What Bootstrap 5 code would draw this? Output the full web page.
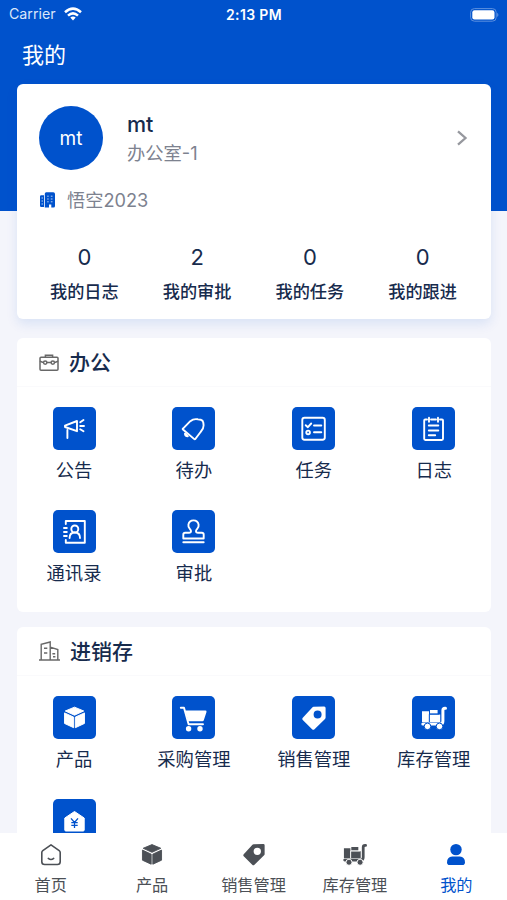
<!DOCTYPE html>
<html lang="zh-CN">
<head>
<meta charset="utf-8">
<meta name="viewport" content="width=device-width, initial-scale=1">
<title>我的</title>
<link href="https://cdn.jsdelivr.net/npm/bootstrap@5.3.0/dist/css/bootstrap.min.css" rel="stylesheet">
<style>
:root{--brand:#0052cc;--ink:#172b4d}
html,body{height:900px;overflow:hidden}
body{background:#f4f5fb;color:var(--ink);font-family:Inter,"Noto Sans CJK SC",sans-serif;line-height:1}
svg{display:block}
.hero{background:var(--brand);height:211px;padding-top:1px}
.status-line{height:27px;font-size:14.2px;padding:0 8px 0 9px;display:grid;grid-template-columns:1fr auto 1fr}
.status-line .carrier{color:#dbe7fa}
.status-line .clock{font-weight:600;font-size:14px;letter-spacing:.35px}
.page-title{font-size:22px;height:54px;padding-left:22px}
.content-wrap{margin:-127px 16px 0 17px}
.panel{background:#fff;border-radius:6px}
.profile{height:235px;box-shadow:0 5px 12px rgba(0,82,204,.11);padding:22px 0 0}
.who{height:64px;padding:0 23px 0 22px}
.avatar{width:64px;height:64px;border-radius:50%;background:var(--brand);font-size:19px}
.who-name{font-size:21.5px;height:31px;font-weight:500;padding-top:3px}
.who-dept{font-size:18.3px;height:29px;color:#7d828f}
.company{height:30px;margin:15px 0 0 23px;font-size:18.2px;color:#7d828f;gap:12px}
.stats{padding:0 12px 0 11px;margin-top:25px}
.stats .num{font-size:22px;height:34px;line-height:34px}
.stats .cap{font-size:17.2px;font-weight:500;height:34px;line-height:35px}
.office{height:274px;margin-top:19px}
.trade{height:290px;margin-top:15px}
.panel-head{height:49px;border-bottom:1px solid #fafafc;padding-left:22px;gap:10px;font-size:21px;font-weight:500}
.apps{display:grid;grid-template-columns:repeat(4,80px);justify-content:space-between;padding:20px 17.3px 0 17px;row-gap:24.7px}
.app{height:78px;font-size:18.3px;white-space:nowrap}
.tile{width:43px;height:43px;border-radius:5px;background:var(--brand)}
.app span{height:35px;line-height:41px}
.trade .app span{line-height:40px}
.tabs{height:67px;background:#fff;color:#4c5056;font-size:16.2px}
.tabs a{flex:1 0 0;color:inherit;text-decoration:none;white-space:nowrap;padding-top:10px}
.tabs a span{height:34px;line-height:38px}
.tabs a.active{color:var(--brand)}
.ln{fill:none;stroke:#fff;stroke-width:1.9;stroke-linecap:round;stroke-linejoin:round}
</style>
</head>
<body>
<svg width="0" height="0" class="position-absolute">
  <symbol id="box" viewBox="0 0 24 24"><path fill="currentColor" stroke="currentColor" stroke-width="1" stroke-linejoin="round" d="M12 1.2 21.6 5.2 12 9.6 2.4 5.2zM1.6 7.2 11.1 11.6V22.6L1.6 18.2zM22.4 7.2 12.9 11.6V22.6L22.4 18.2z"/></symbol>
  <symbol id="tag" viewBox="0 0 24 24"><path fill="currentColor" fill-rule="evenodd" d="M11.6.8 22.2.5Q23.6.5 23.6 2V11.6Q23.6 12.3 23 12.9L12.5 23.2Q11.3 24.4 10.1 23.2L.8 14Q-.2 12.9.8 11.8L10.3 1.4Q10.8.8 11.6.8zM15.6 4.5a4 4 0 1 0 0 8 4 4 0 0 0 0-8z"/></symbol>
  <symbol id="trolley" viewBox="0 0 26 24"><path fill="currentColor" d="M1 5.2H8V16H1zM9 4h7.6v3.6H9zM8.6 8.6h10.6V16H8.6z"/><path d="M8.3 16V8.2h10" fill="none" stroke="var(--gap)" stroke-width=".9"/><path d="M1.8 18h17.5q2.6 0 2.6-3V4.2q0-2 2-2h.6" fill="none" stroke="currentColor" stroke-width="3" stroke-linecap="round"/><circle cx="6.5" cy="20.4" r="3.3" fill="currentColor" stroke="var(--gap)" stroke-width="1"/><circle cx="18.5" cy="20.4" r="3.3" fill="currentColor" stroke="var(--gap)" stroke-width="1"/></symbol>
</svg>

<header class="hero text-white">
  <div class="status-line align-items-center">
    <div class="d-flex align-items-center gap-2"><span class="carrier">Carrier</span>
      <svg class="ms-n1" width="18" height="14" viewBox="0 0 18 14" fill="none" stroke="#fff" stroke-width="2.5"><path d="M1 5.2Q9-2 17 5.2M4 8.6Q9 4.1 14 8.6"/><path d="M6.3 10.6Q9 8.3 11.7 10.6L9 13.6z" fill="#fff" stroke="none"/></svg>
    </div>
    <span class="clock">2:13 PM</span>
    <svg class="ms-auto" width="30" height="14" viewBox="0 0 30 14"><rect x="1.6" y=".6" width="25.6" height="12.6" rx="3.8" fill="none" stroke="#5c90df"/><rect x="3.3" y="2.3" width="22.2" height="9.2" rx="2.2" fill="#fff"/><path d="M28.4 4.8q1.8 2.1 0 4.2z" fill="#7da7e6"/></svg>
  </div>
  <div class="page-title d-flex align-items-center">我的</div>
</header>

<main class="content-wrap">
  <section class="panel profile">
    <div class="who d-flex align-items-center">
      <div class="avatar d-flex align-items-center justify-content-center text-white flex-shrink-0">mt</div>
      <div class="ms-4 flex-grow-1 d-flex flex-column">
        <div class="who-name d-flex align-items-center">mt</div>
        <div class="who-dept d-flex align-items-center">办公室-1</div>
      </div>
      <svg width="12" height="16" viewBox="0 0 12 16"><path d="M2 1.3 9.5 8 2 14.7" fill="none" stroke="#96989e" stroke-width="2.3"/></svg>
    </div>
    <div class="company d-flex align-items-center">
      <svg width="15" height="16" viewBox="0 0 15 16"><path d="M0 4.5Q0 3.2 1.2 3.2H4V15H1.2Q0 15 0 13.8zM4.8 1.8Q4.8.3 6.2.3H13.3Q15 .3 15 2V14Q15 15.5 13.5 15.5H11.3V12.4H9v3.1H4.8z" fill="#0052cc"/><path d="M1.5 6H3M1.5 9H3M1.5 12H3M7.2 4.2H8.7M7.2 7H8.7M7.2 9.8H8.7M10.8 4.2h1.7M10.8 7h1.7M10.8 9.8h1.7" stroke="#b5d0f7" stroke-width="1"/></svg>
      <span>悟空2023</span>
    </div>
    <div class="stats d-flex text-center">
      <div class="col-3"><div class="num">0</div><div class="cap">我的日志</div></div>
      <div class="col-3"><div class="num">2</div><div class="cap">我的审批</div></div>
      <div class="col-3"><div class="num">0</div><div class="cap">我的任务</div></div>
      <div class="col-3"><div class="num">0</div><div class="cap">我的跟进</div></div>
    </div>
  </section>

  <section class="panel office">
    <div class="panel-head d-flex align-items-center">
      <svg width="20" height="17" viewBox="0 0 20 17" fill="none" stroke="#686868" stroke-width="1.5"><rect x="1" y="3.2" width="18" height="13" rx="1"/><path d="M6.4 3V1.2h7.2V3M1 7.2Q3 8.4 4.4 8.4M15.6 8.4Q17 8.4 19 7.2M8 8.6h4"/><circle cx="6.2" cy="8.6" r="1.7"/><circle cx="13.8" cy="8.6" r="1.7"/></svg>
      <span>办公</span>
    </div>
    <div class="apps">
      <div class="app d-flex flex-column align-items-center">
        <div class="tile"><svg class="ln" width="43" height="43" viewBox="0 0 43 43"><path d="M12 18.6 24 14V24.2L12 20zM14.4 23V31M27.2 15.3 30.5 13M27.2 19H31M27.2 22.2 30.5 24.3"/></svg></div><span>公告</span></div>
      <div class="app d-flex flex-column align-items-center">
        <div class="tile"><svg class="ln" width="43" height="43" viewBox="0 0 43 43"><path d="M11 21.6 18.3 14.2Q21.6 11.4 26 12.3L28.8 12.7Q31 13.2 31.3 15.6L31.6 18.4Q31.7 21.8 28.6 25L23.5 31.8Q22.8 32.6 22 31.9L11 22.6Q10.4 22.1 11 21.6z"/><path d="M13 26.5Q12.8 29.2 15.8 29.2L13.6 27z"/></svg></div><span>待办</span></div>
      <div class="app d-flex flex-column align-items-center">
        <div class="tile"><svg class="ln" width="43" height="43" viewBox="0 0 43 43"><rect x="10.3" y="10.8" width="22.5" height="22" rx="2.2"/><path d="M13.7 18.2 15.9 20.2 19.2 16.5M22 18.5h7.3M22 25.3h7.3"/><circle cx="16.1" cy="25.4" r="1.8"/></svg></div><span>任务</span></div>
      <div class="app d-flex flex-column align-items-center">
        <div class="tile"><svg class="ln" width="43" height="43" viewBox="0 0 43 43"><path d="M15 12.5H13.2Q12.2 12.5 12.2 13.5V31.8Q12.2 33 13.4 33H29.8Q31 33 31 31.8V13.5Q31 12.5 30 12.5H28M19 12.5h5M17 10.7v4M26 10.7v4M16.8 18.5h9.5M16.8 23.5h9.5M16.8 28.3h6.4"/></svg></div><span>日志</span></div>
      <div class="app d-flex flex-column align-items-center">
        <div class="tile"><svg class="ln" width="43" height="43" viewBox="0 0 43 43"><path d="M12.8 14V11H31.8V32.8H12.8V30M11 18h2.8M11 22h2.8M11 26h2.8M16.6 28Q16.6 22.5 21.8 22.5T27 28"/><circle cx="21.8" cy="19" r="3.5"/></svg></div><span>通讯录</span></div>
      <div class="app d-flex flex-column align-items-center">
        <div class="tile"><svg class="ln" width="43" height="43" viewBox="0 0 43 43"><path d="M11.3 28.5V24.7Q11.3 22.8 13.2 22.8H17Q19 22.8 19 21 19 20.2 17.8 18.9 16 17 16.4 14.7 17.2 10.4 21.5 10.4T26.6 14.7Q27 17 25.2 18.9 24 20.2 24 21 24 22.8 26 22.8H29.8Q31.7 22.8 31.7 24.7V28.5zM11.3 32.3H31.7"/></svg></div><span>审批</span></div>
    </div>
  </section>

  <section class="panel trade">
    <div class="panel-head d-flex align-items-center">
      <svg width="21" height="20" viewBox="0 0 21 20" fill="none" stroke="#686868" stroke-width="1.4"><path d="M0 19H21M2.2 19V3.3L11.2 1V19M11.2 6.2 18.8 8.5V19M5 7.2h3.3M5 12h3.3M13.4 12.7h2.8M14 15.7h2.4"/></svg>
      <span>进销存</span>
    </div>
    <div class="apps">
      <div class="app d-flex flex-column align-items-center"><div class="tile d-flex align-items-center justify-content-center text-white"><svg width="23" height="25"><use href="#box"/></svg></div><span>产品</span></div>
      <div class="app d-flex flex-column align-items-center"><div class="tile"><svg width="43" height="43" viewBox="0 0 43 43"><path d="M8.8 11.8H12L16.6 28.3H31" class="ln"/><path d="M13.2 14.6H33.4Q34.8 14.6 34.5 16L31.8 24.2Q31.5 25.2 30.5 25.2H16.2z" fill="#fff"/><circle cx="16.6" cy="32.7" r="2.7" fill="#fff"/><circle cx="28" cy="32.7" r="2.7" fill="#fff"/></svg></div><span>采购管理</span></div>
      <div class="app d-flex flex-column align-items-center"><div class="tile d-flex align-items-center justify-content-center text-white"><svg width="24" height="24"><use href="#tag"/></svg></div><span>销售管理</span></div>
      <div class="app d-flex flex-column align-items-center"><div class="tile d-flex align-items-center justify-content-center text-white" style="--gap:#0052cc"><svg width="26" height="24"><use href="#trolley"/></svg></div><span>库存管理</span></div>
      <div class="app d-flex flex-column align-items-center"><div class="tile"><svg width="43" height="43" viewBox="0 0 43 43"><path d="M21.5 12.5 31.2 19V31Q31.2 32 30.2 32H12.8Q11.8 32 11.8 31V19z" fill="#fff" stroke="#fff" stroke-linejoin="round"/><path d="M18 19.3 21.5 23.5 25 19.3M21.5 23.5V29M18.3 23.7h6.4M18.3 26.3h6.4" fill="none" stroke="#0052cc" stroke-width="1.3"/></svg></div></div>
    </div>
  </section>
</main>

<nav class="tabs fixed-bottom d-flex" style="--gap:#fff">
  <a href="#" class="d-flex flex-column align-items-center"><svg width="22" height="23" viewBox="0 0 22 23" fill="none" stroke="currentColor" stroke-width="1.6" stroke-linejoin="round" stroke-linecap="round"><path d="M11 1.8 19.2 7.6Q20.2 8.4 20.2 9.6V18.7Q20.2 21.5 17.4 21.5H4.6Q1.8 21.5 1.8 18.7V9.6Q1.8 8.4 2.8 7.6zM8.3 15.4Q11 17.6 13.7 15.4"/></svg><span>首页</span></a>
  <a href="#" class="d-flex flex-column align-items-center"><svg width="22" height="23"><use href="#box"/></svg><span>产品</span></a>
  <a href="#" class="d-flex flex-column align-items-center"><svg width="22" height="23"><use href="#tag"/></svg><span>销售管理</span></a>
  <a href="#" class="d-flex flex-column align-items-center"><svg width="24" height="23"><use href="#trolley"/></svg><span>库存管理</span></a>
  <a href="#" class="active d-flex flex-column align-items-center"><svg width="20" height="23" viewBox="0 0 20 23" fill="currentColor"><circle cx="10" cy="6.6" r="5.7"/><path d="M6.2 13.4H13.8Q19 14.1 19 19.2 19 22 16.4 22H3.6Q1 22 1 19.2 1 14.1 6.2 13.4z"/></svg><span>我的</span></a>
</nav>
<script src="https://cdn.jsdelivr.net/npm/bootstrap@5.3.0/dist/js/bootstrap.bundle.min.js"></script>
</body>
</html>
